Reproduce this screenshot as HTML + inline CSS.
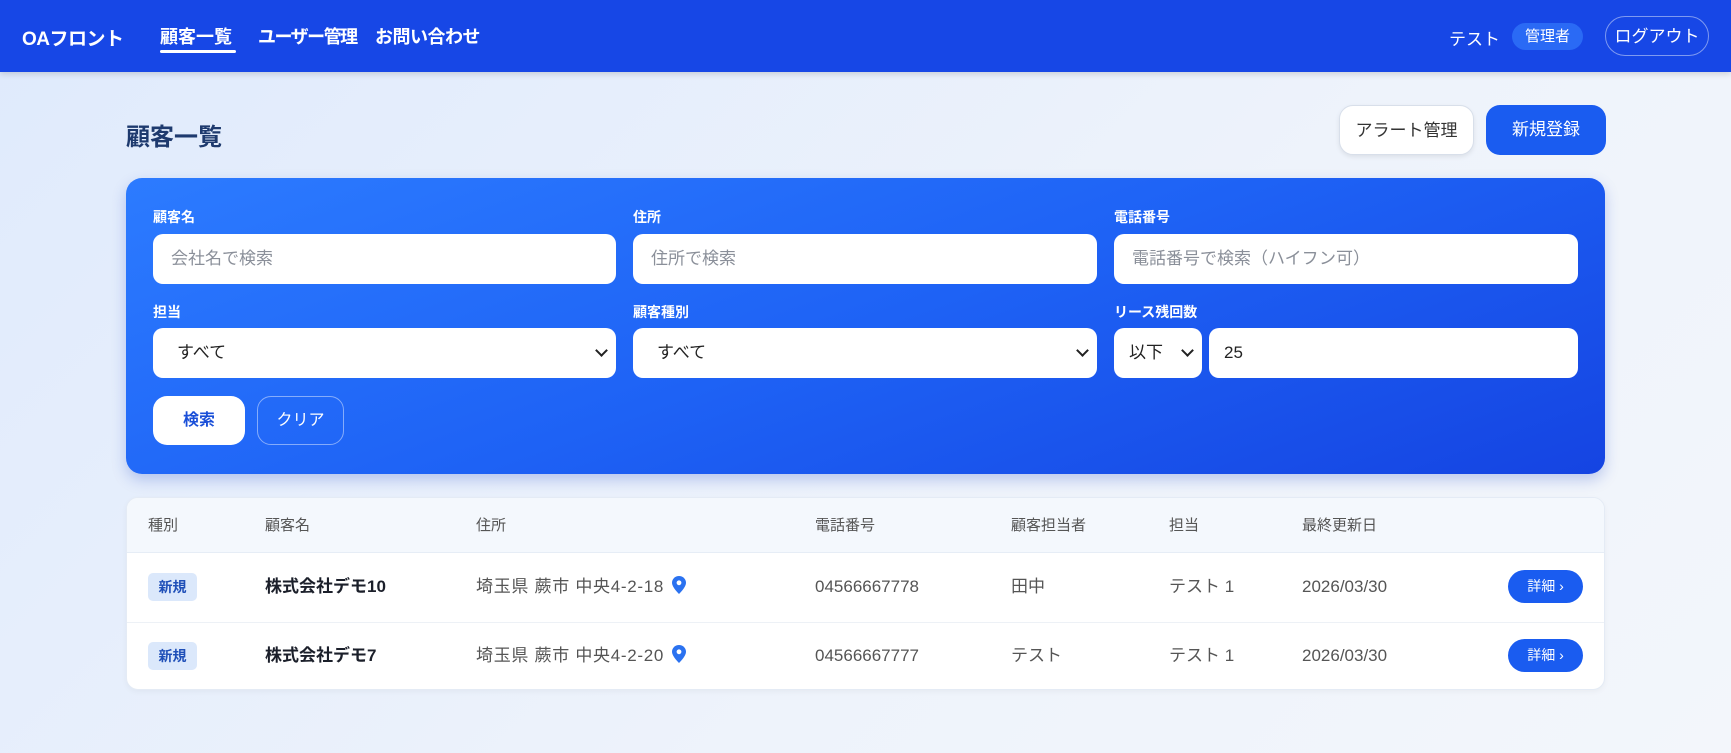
<!DOCTYPE html>
<html><head><meta charset="utf-8"><style>
*{box-sizing:border-box;margin:0;padding:0}
body{width:1731px;height:753px;overflow:hidden;font-family:"Liberation Sans","Noto Sans CJK JP",sans-serif;background:linear-gradient(135deg,#dfeafc 0%,#eef3fb 60%,#f3f6fb 100%);position:relative;color:#1f2937}
.hdr{position:absolute;left:0;top:0;width:1731px;height:72px;background:#1747e6;box-shadow:0 2px 6px rgba(0,0,0,.15)}
.a{position:absolute;white-space:nowrap}
.logo{left:22px;top:24px;color:#fff;font-size:19px;font-weight:bold;letter-spacing:-.5px}
.nav{top:23px;color:#fff;font-size:18px;font-weight:bold}
.ul{left:160px;top:50px;width:76px;height:3px;background:#fff;border-radius:2px}
.badge{left:1512px;top:23px;width:71px;height:27px;border-radius:14px;background:#2a6af5;color:#fff;font-size:15px;text-align:center;line-height:27px}
.logout{left:1605px;top:16px;width:104px;height:40px;border:1px solid rgba(255,255,255,.45);border-radius:20px;color:#fff;font-size:17px;text-align:center;line-height:40px}
.title{left:126px;top:117px;font-size:24px;font-weight:bold;color:#1e3a6e}
.btn{height:50px;border-radius:14px;font-size:17px;text-align:center;line-height:50px}
.panel{left:126px;top:178px;width:1479px;height:296px;border-radius:16px;background:linear-gradient(160deg,#2c7bff 0%,#1e62f5 50%,#1544e2 100%);box-shadow:0 6px 14px rgba(30,70,200,.25)}
.lbl{color:#fff;font-size:14px;font-weight:bold}
.inp{background:#fff;border-radius:10px;height:50px;font-size:17px;line-height:50px;padding-left:18px;color:#222}
.ph{color:#8a8f99}
.chev{position:absolute;right:6px;top:18px;width:9px;height:9px;border-right:2px solid #222;border-bottom:2px solid #222;transform:rotate(45deg)}
.tbl{left:126px;top:497px;width:1479px;height:193px;background:#fff;border-radius:12px;border:1px solid #e4ebf5;overflow:hidden;box-shadow:0 2px 6px rgba(0,0,0,.04)}
.th{position:absolute;top:0;left:0;width:100%;height:55px;background:#f4f8fd;border-bottom:1px solid #e6edf6}
.hc{top:16px;font-size:15px;color:#555;line-height:24px}
.cell{font-size:17px;color:#555;line-height:26px;height:26px}
.tag{width:49px;height:28px;background:#dbe8fb;color:#1f4fb8;border-radius:5px;font-size:14px;font-weight:bold;text-align:center;line-height:28px}
.det{width:75px;height:33px;border-radius:17px;background:#1a5cf0;color:#fff;font-size:14px;text-align:center;line-height:33px}
.addr{letter-spacing:.7px}
</style></head><body>
<div class="hdr">
<div class="a logo">OAフロント</div>
<div class="a nav" style="left:160px">顧客一覧</div>
<div class="a ul"></div>
<div class="a nav" style="left:258px;letter-spacing:-1.5px">ユーザー管理</div>
<div class="a nav" style="left:375px;letter-spacing:-.5px">お問い合わせ</div>
<div class="a" style="left:1449px;top:25px;color:#fff;font-size:17px">テスト</div>
<div class="a badge">管理者</div>
<div class="a logout">ログアウト</div>
</div>
<div class="a title">顧客一覧</div>
<div class="a btn" style="left:1339px;top:105px;width:135px;background:#fff;color:#333;border:1px solid #d8dfea;box-shadow:0 2px 5px rgba(0,0,0,.08)">アラート管理</div>
<div class="a btn" style="left:1486px;top:105px;width:120px;background:#1a5cf0;color:#fff">新規登録</div>

<div class="a panel"></div>
<div class="a lbl" style="left:153px;top:207px">顧客名</div>
<div class="a lbl" style="left:633px;top:207px">住所</div>
<div class="a lbl" style="left:1114px;top:207px">電話番号</div>
<div class="a inp ph" style="left:153px;top:234px;width:463px">会社名で検索</div>
<div class="a inp ph" style="left:633px;top:234px;width:464px">住所で検索</div>
<div class="a inp ph" style="left:1114px;top:234px;width:464px">電話番号で検索（ハイフン可）</div>
<div class="a lbl" style="left:153px;top:302px">担当</div>
<div class="a lbl" style="left:633px;top:302px">顧客種別</div>
<div class="a lbl" style="left:1114px;top:302px">リース残回数</div>
<div class="a inp" style="left:153px;top:328px;width:463px;padding-left:24px">すべて<span class="chev" style="right:10px"></span></div>
<div class="a inp" style="left:633px;top:328px;width:464px;padding-left:24px">すべて<span class="chev" style="right:10px"></span></div>
<div class="a inp" style="left:1114px;top:328px;width:88px;padding-left:15px">以下<span class="chev" style="right:10px"></span></div>
<div class="a inp" style="left:1209px;top:328px;width:369px;padding-left:15px">25</div>
<div class="a btn" style="left:153px;top:396px;width:92px;height:49px;line-height:49px;background:#fff;color:#1a4fd8;font-weight:bold;font-size:16px">検索</div>
<div class="a btn" style="left:257px;top:396px;width:87px;height:49px;line-height:47px;border:1px solid rgba(255,255,255,.45);color:#fff;font-size:16px">クリア</div>

<div class="a tbl">
<div class="th"></div>
<div class="a hc" style="left:21px">種別</div>
<div class="a hc" style="left:138px">顧客名</div>
<div class="a hc" style="left:349px">住所</div>
<div class="a hc" style="left:688px">電話番号</div>
<div class="a hc" style="left:884px">顧客担当者</div>
<div class="a hc" style="left:1042px">担当</div>
<div class="a hc" style="left:1175px">最終更新日</div>
<div class="a" style="left:0;top:124px;width:100%;height:1px;background:#edf1f6"></div>

<div class="a tag" style="left:21px;top:75px">新規</div>
<div class="a cell" style="left:138px;top:76px;font-weight:bold;color:#1b1f2a">株式会社デモ10</div>
<div class="a cell addr" style="left:349px;top:76px">埼玉県 蕨市 中央4-2-18 <svg width="14" height="18" viewBox="0 0 14 18" style="vertical-align:-2px;margin-left:2px"><path d="M7 0C3.1 0 0 3 0 6.8 0 11.5 7 18 7 18s7-6.5 7-11.2C14 3 10.9 0 7 0z" fill="#2b72f0"/><circle cx="7" cy="6.8" r="2.4" fill="#fff"/></svg></div>
<div class="a cell" style="left:688px;top:76px">04566667778</div>
<div class="a cell" style="left:884px;top:76px">田中</div>
<div class="a cell" style="left:1042px;top:76px">テスト 1</div>
<div class="a cell" style="left:1175px;top:76px">2026/03/30</div>
<div class="a det" style="left:1381px;top:72px">詳細 ›</div>

<div class="a tag" style="left:21px;top:144px">新規</div>
<div class="a cell" style="left:138px;top:145px;font-weight:bold;color:#1b1f2a">株式会社デモ7</div>
<div class="a cell addr" style="left:349px;top:145px">埼玉県 蕨市 中央4-2-20 <svg width="14" height="18" viewBox="0 0 14 18" style="vertical-align:-2px;margin-left:2px"><path d="M7 0C3.1 0 0 3 0 6.8 0 11.5 7 18 7 18s7-6.5 7-11.2C14 3 10.9 0 7 0z" fill="#2b72f0"/><circle cx="7" cy="6.8" r="2.4" fill="#fff"/></svg></div>
<div class="a cell" style="left:688px;top:145px">04566667777</div>
<div class="a cell" style="left:884px;top:145px">テスト</div>
<div class="a cell" style="left:1042px;top:145px">テスト 1</div>
<div class="a cell" style="left:1175px;top:145px">2026/03/30</div>
<div class="a det" style="left:1381px;top:141px">詳細 ›</div>
</div>
</body></html>
